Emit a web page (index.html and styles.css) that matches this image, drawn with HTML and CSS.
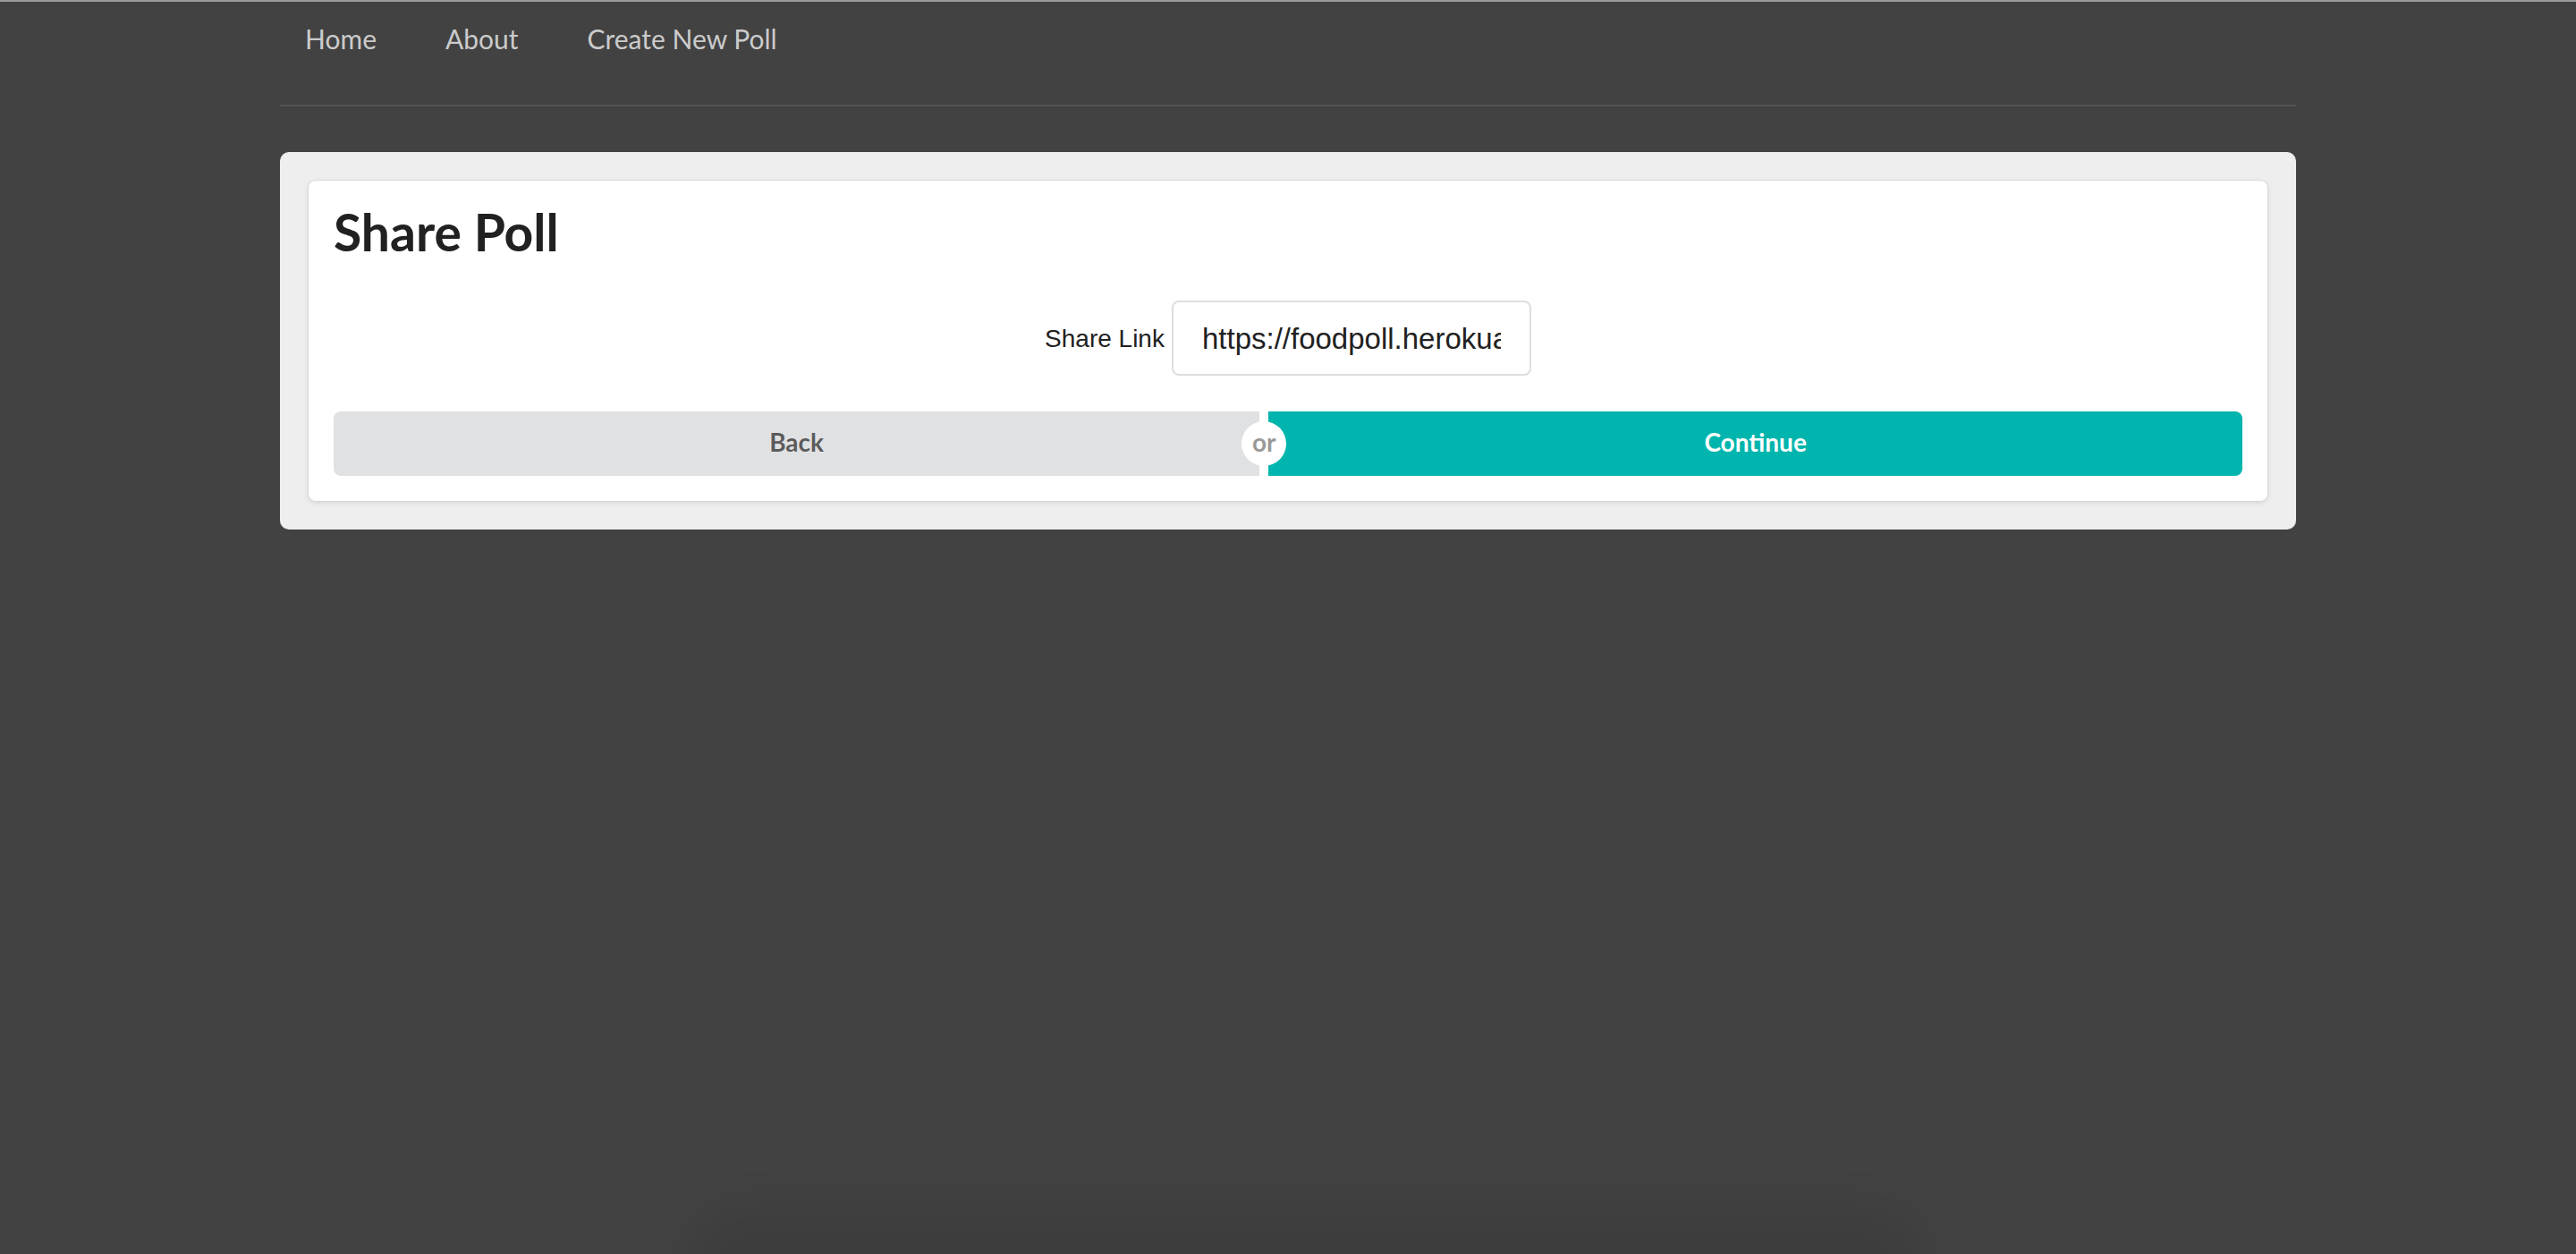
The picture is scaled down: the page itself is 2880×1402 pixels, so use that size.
FILE: index.html
```html
<!DOCTYPE html>
<html lang="en">
<head>
<meta charset="utf-8">
<title>Share Poll</title>
<link rel="stylesheet" href="styles.css">
</head>
<body>
  <div class="container">
    <nav class="menu">
      <a class="menu-item" href="#">Home</a>
      <a class="menu-item" href="#">About</a>
      <a class="menu-item" href="#">Create New Poll</a>
    </nav>
    <div class="segment">
      <div class="card">
        <h1 class="card-title">Share Poll</h1>
        <div class="share-row">
          <label class="share-label" for="share-link">Share Link</label>
          <input class="share-input" id="share-link" type="text" value="https://foodpoll.herokuapp.com/polls/share" readonly>
        </div>
        <div class="buttons">
          <button class="btn btn-back" type="button">Back</button>
          <span class="or"><span class="or-label">or</span></span>
          <button class="btn btn-continue" type="button">Continue</button>
        </div>
      </div>
    </div>
  </div>
  <div class="dock-shadow"></div>
</body>
</html>
```

FILE: styles.css
```css
html, body {
  margin: 0;
  padding: 0;
}

body {
  background: #424242;
  border-top: 2px solid #9b9b9b;
  min-height: 1400px;
  font-family: Lato, "Open Sans", "Liberation Sans", sans-serif;
  overflow: hidden;
}

.container {
  width: 2254px;
  margin: 0 auto;
}

.menu {
  display: flex;
  height: 115px;
  border-bottom: 2px solid #545454;
  padding-left: 28px;
  gap: 77px;
}

.menu-item {
  padding-top: 26px;
  font-size: 30px;
  line-height: 30px;
  color: #cbcbcb;
  text-decoration: none;
}

.segment {
  margin-top: 51px;
  background: #eeeeee;
  border-radius: 10px;
  padding: 32px;
}

.card {
  background: #ffffff;
  border-radius: 8px;
  box-shadow: 0 2px 6px 0 #d4d4d5, 0 0 0 1px #dcdcdd;
  padding: 28px;
}

.card-title {
  margin: 0;
  font-size: 57px;
  line-height: 58px;
  font-weight: 700;
  color: #212121;
}

.share-row {
  display: flex;
  justify-content: center;
  align-items: center;
  margin-top: 48px;
}

.share-label {
  font-family: "Liberation Sans", Arial, sans-serif;
  font-size: 28px;
  color: #212121;
  margin-right: 8px;
  padding-top: 2px;
}

.share-input {
  box-sizing: border-box;
  width: 402px;
  height: 84px;
  border: 2px solid #dedede;
  border-radius: 8px;
  padding: 2px 32px 0;
  font-family: "Liberation Sans", Arial, sans-serif;
  font-size: 33px;
  color: #212121;
  background: #ffffff;
  outline: none;
}

.buttons {
  display: flex;
  margin-top: 40px;
  height: 72px;
}

.btn {
  flex: 1 0 auto;
  height: 72px;
  border: 0;
  padding: 0 42px 4px;
  font-family: Lato, "Open Sans", sans-serif;
  font-size: 28px;
  font-weight: 700;
  cursor: pointer;
}

.btn-back {
  background: #e0e1e2;
  color: rgba(0, 0, 0, 0.6);
  border-radius: 8px 0 0 8px;
}

.btn-continue {
  background: #00b5ad;
  color: #ffffff;
  border-radius: 0 8px 8px 0;
}

.or {
  flex: 0 0 10px;
  position: relative;
  z-index: 3;
}

.or-label {
  position: absolute;
  left: -20px;
  top: 11px;
  width: 50px;
  height: 50px;
  border-radius: 50%;
  background: #ffffff;
  color: #999999;
  font-size: 28px;
  font-weight: 700;
  line-height: 46px;
  text-align: center;
}

.dock-shadow {
  position: fixed;
  left: 770px;
  width: 1380px;
  bottom: -70px;
  height: 120px;
  border-radius: 60px;
  background: rgba(0, 0, 0, 0.07);
  filter: blur(24px);
  pointer-events: none;
}
```
